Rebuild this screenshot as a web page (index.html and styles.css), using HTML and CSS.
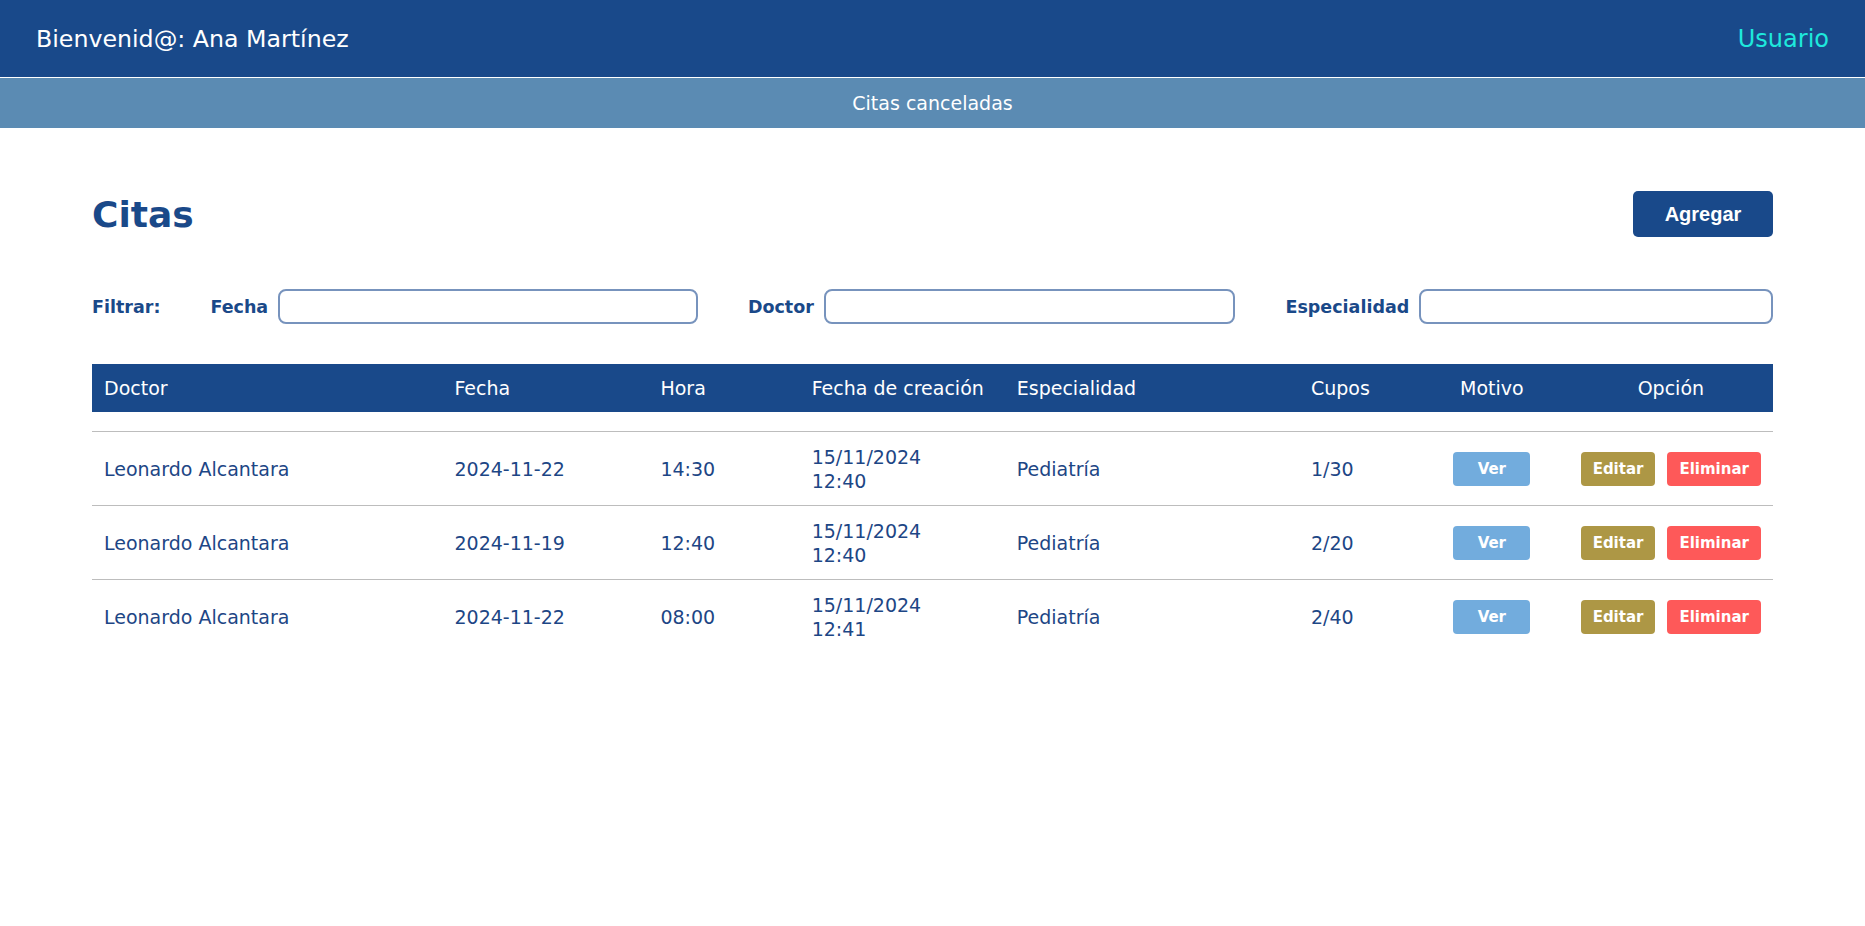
FILE: index.html
```html
<!DOCTYPE html>
<html lang="es">
<head>
<meta charset="utf-8">
<title>Citas canceladas</title>
<link rel="stylesheet" href="styles.css">
</head>
<body>
<header class="topbar">
  <span class="welcome">Bienvenid@: Ana Martínez</span>
  <a class="user-link" href="#">Usuario</a>
</header>
<nav class="subbar">Citas canceladas</nav>
<main class="container">
  <div class="title-row">
    <h1 class="title">Citas</h1>
    <button class="btn-add">Agregar</button>
  </div>
  <div class="filters">
    <span class="filter-title">Filtrar:</span>
    <label class="filter-group"><span class="filter-label">Fecha</span><input class="filter-input" type="text"></label>
    <label class="filter-group"><span class="filter-label">Doctor</span><input class="filter-input" type="text"></label>
    <label class="filter-group"><span class="filter-label">Especialidad</span><input class="filter-input" type="text"></label>
  </div>
  <table class="table">
    <colgroup>
      <col class="c-doctor"><col class="c-fecha"><col class="c-hora"><col class="c-creacion">
      <col class="c-esp"><col class="c-cupos"><col class="c-motivo"><col class="c-opcion">
    </colgroup>
    <thead>
      <tr>
        <th>Doctor</th><th>Fecha</th><th>Hora</th><th>Fecha de creación</th>
        <th>Especialidad</th><th>Cupos</th><th class="center">Motivo</th><th class="center">Opción</th>
      </tr>
    </thead>
    <tbody>
      <tr>
        <td>Leonardo Alcantara</td><td>2024-11-22</td><td>14:30</td><td>15/11/2024<br>12:40</td>
        <td>Pediatría</td><td>1/30</td>
        <td class="center"><button class="btn btn-ver">Ver</button></td>
        <td class="center"><div class="actions"><button class="btn btn-edit">Editar</button><button class="btn btn-del">Eliminar</button></div></td>
      </tr>
      <tr>
        <td>Leonardo Alcantara</td><td>2024-11-19</td><td>12:40</td><td>15/11/2024<br>12:40</td>
        <td>Pediatría</td><td>2/20</td>
        <td class="center"><button class="btn btn-ver">Ver</button></td>
        <td class="center"><div class="actions"><button class="btn btn-edit">Editar</button><button class="btn btn-del">Eliminar</button></div></td>
      </tr>
      <tr>
        <td>Leonardo Alcantara</td><td>2024-11-22</td><td>08:00</td><td>15/11/2024<br>12:41</td>
        <td>Pediatría</td><td>2/40</td>
        <td class="center"><button class="btn btn-ver">Ver</button></td>
        <td class="center"><div class="actions"><button class="btn btn-edit">Editar</button><button class="btn btn-del">Eliminar</button></div></td>
      </tr>
    </tbody>
  </table>
</main>
</body>
</html>
```
FILE: styles.css
```css
* { box-sizing: border-box; }

body {
  margin: 0;
  font-family: "DejaVu Sans", "Liberation Sans", sans-serif;
  background: #ffffff;
  color: #1a4989;
}

.topbar {
  height: 77px;
  background: #19498a;
  border-bottom: 1px solid #ffffff;
  display: flex;
  align-items: center;
  justify-content: space-between;
  padding: 0 36px;
  box-sizing: content-box;
}

.welcome {
  color: #ffffff;
  font-size: 23.7px;
}

.user-link {
  color: #1ee8dc;
  font-size: 24px;
  text-decoration: none;
}

.subbar {
  height: 50px;
  background: #5b8bb3;
  color: #ffffff;
  font-size: 19px;
  display: flex;
  align-items: center;
  justify-content: center;
}

.container {
  width: calc(100% - 184px);
  margin: 0 auto;
}

.title-row {
  margin-top: 63px;
  height: 46px;
  display: flex;
  align-items: center;
  justify-content: space-between;
}

.title {
  margin: 0;
  font-size: 36px;
  font-weight: bold;
  color: #1a4989;
}

.btn-add {
  width: 140px;
  height: 46px;
  border: none;
  border-radius: 5px;
  background: #19498a;
  color: #ffffff;
  font-family: "Liberation Sans", Arial, sans-serif;
  font-weight: bold;
  font-size: 20px;
  cursor: pointer;
}

.filters {
  margin-top: 52px;
  display: flex;
  align-items: center;
  gap: 50px;
}

.filter-title,
.filter-label {
  font-size: 17.5px;
  font-weight: bold;
  color: #1a4989;
}

.filter-group {
  flex: 1;
  display: flex;
  align-items: center;
  gap: 10px;
}

.filter-input {
  flex: 1;
  min-width: 0;
  height: 35px;
  border: 2px solid #7793bd;
  border-radius: 8px;
  font-size: 16px;
  padding: 0 8px;
  outline: none;
}

.table {
  margin-top: 40px;
  width: 100%;
  table-layout: fixed;
  border-collapse: separate;
  border-spacing: 0;
  font-size: 19px;
}

.c-doctor { width: 20.85%; }
.c-fecha { width: 12.25%; }
.c-hora { width: 9%; }
.c-creacion { width: 12.2%; }
.c-esp { width: 17.5%; }
.c-cupos { width: 6.9%; }
.c-motivo { width: 9.15%; }
.c-opcion { width: 12.15%; }

.table th {
  height: 67px;
  background: #19498a;
  border-bottom: 19px solid #ffffff;
  color: #ffffff;
  font-weight: normal;
  text-align: left;
  padding: 0 12px;
  white-space: nowrap;
}

.table td {
  height: 74px;
  border-top: 1px solid #bdbdbd;
  padding: 0 12px;
  color: #1d4685;
  line-height: 24px;
  vertical-align: middle;
}

.table .center { text-align: center; }

.actions {
  display: flex;
  justify-content: center;
  gap: 12px;
}

.btn {
  height: 34px;
  border: none;
  border-radius: 4px;
  color: #ffffff;
  font-family: "DejaVu Sans", sans-serif;
  font-weight: bold;
  font-size: 15px;
  padding: 0;
  cursor: pointer;
}

.btn-ver {
  background: #72acdd;
  width: 77px;
}

.btn-edit {
  background: #ad9745;
  width: 75px;
}

.btn-del {
  background: #fe5959;
  width: 94px;
}
```
